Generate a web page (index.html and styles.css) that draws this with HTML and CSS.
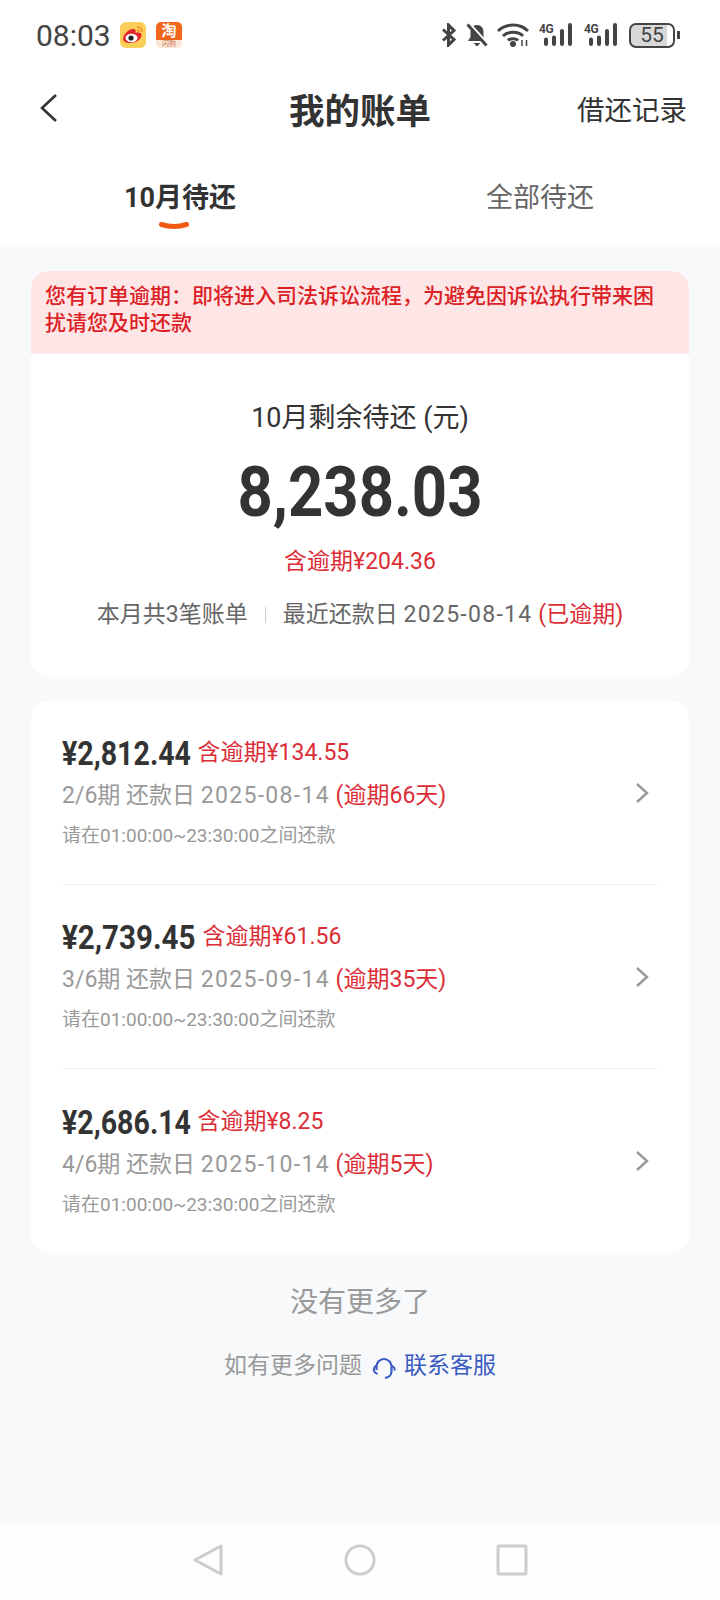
FILE: index.html
```html
<!DOCTYPE html>
<html>
<head>
<meta http-equiv="Content-Type" content="text/html; charset=utf-8"/>
<title>我的账单</title>
<link rel="stylesheet" href="styles.css">
</head>
<body>

<div class="status">
  <span class="time">08:03</span>
  <svg class="app-icon" viewBox="0 0 26 26">
    <rect width="26" height="26" rx="6" fill="#fbcf5a"/>
    <path d="M3 17c0-5 6-10 10-10 3 0 3 2 2.500 4 3-1 6-.5 6 2 0 4-5 8-11 8-4 0-7.500-1.500-7.500-4z" fill="#e6262c"/>
    <ellipse cx="11.500" cy="16" rx="6" ry="4.200" fill="#fff"/>
    <circle cx="11" cy="16" r="2.600" fill="#222"/>
    <path d="M17 5c3 0 5 2 5 5M17 8c1.300 0 2 .8 2 2" fill="none" stroke="#ef8d1c" stroke-width="1.500"/>
  </svg>
  <span class="tao"><span class="tao-top">淘</span><span class="tao-sub">闪购</span></span>
  <span class="status-right">
    <svg class="ic-bt" viewBox="0 0 16 24"><path d="M2 6.500l11 10-5.500 5.500V2L13 7.500 2 17.500" fill="none" stroke="#444" stroke-width="3"/></svg>
    <svg class="ic-bell" viewBox="0 0 22 24"><path d="M11 2c4 0 6.500 3 6.500 7v5l2.500 4H2l2.500-4V9C4.500 5 7 2 11 2z" fill="#444"/><path d="M7.500 20h7l-3.500 3.500z" fill="#444"/><path d="M3 0l19 21" stroke="#fff" stroke-width="2.500"/><path d="M1.500 1.500l19 21" stroke="#444" stroke-width="3"/></svg>
    <svg class="ic-wifi" viewBox="0 0 32 24"><path d="M1 8c8-8 22-8 30 0M6 13c5-5 15-5 20 0M11 17.500c2.500-2.500 7.500-2.500 10 0" fill="none" stroke="#444" stroke-width="3"/><circle cx="16" cy="21" r="3" fill="#444"/><path d="M25 17v6M29.500 17v6" stroke="#444" stroke-width="1.500"/></svg>
    <span class="net"><span class="net-g">4G</span><svg viewBox="0 0 30 23"><path d="M2 16.500V21M10 14.500V21M18 8V21M26 2V21" stroke="#444" stroke-width="4" stroke-linecap="round"/></svg></span>
    <span class="net"><span class="net-g">4G</span><svg viewBox="0 0 30 23"><path d="M2 16.500V21M10 14.500V21M18 8V21M26 2V21" stroke="#444" stroke-width="4" stroke-linecap="round"/></svg></span>
    <span class="battery"><span class="battery-num">55</span></span><span class="battery-cap"></span>
  </span>
</div>

<div class="nav">
  <svg class="back" viewBox="0 0 20 30"><path d="M17 2L3 15l14 13" fill="none" stroke="#333" stroke-width="2.600"/></svg>
  <div class="nav-title">我的账单</div>
  <div class="nav-link">借还记录</div>
</div>

<div class="tabs">
  <div class="tab tab-on">
    <span>10月待还</span>
    <svg class="tab-mark" viewBox="0 0 30 8"><path d="M2.500 2.500c8 2.500 17 2.500 25 0" fill="none" stroke="#f25a13" stroke-width="5" stroke-linecap="round"/></svg>
  </div>
  <div class="tab"><span>全部待还</span></div>
</div>

<div class="main">
  <div class="card">
    <div class="alert">您有订单逾期&#xFF1A;即将进入司法诉讼流程&#xFF0C;为避免因诉讼执行带来困扰请您及时还款</div>
    <div class="summary">
      <div class="sum-title">10月剩余待还 (元)</div>
      <div class="sum-amount">8,238.03</div>
      <div class="sum-over">含逾期¥204.36</div>
      <div class="sum-meta">
        <span>本月共3笔账单</span>
        <span class="sep"></span>
        <span>最近还款日 <span class="date">2025-08-14</span> <span class="red">(已逾期)</span></span>
      </div>
    </div>
  </div>

  <div class="card bills">
    <div class="bill">
      <div class="bill-text">
        <div class="bill-top"><span class="bill-amount">¥2,812.44</span><span class="red">含逾期¥134.55</span></div>
        <div class="bill-date">2/6期 还款日 <span class="date">2025-08-14</span> <span class="red">(逾期66天)</span></div>
        <div class="bill-note">请在01:00:00~23:30:00之间还款</div>
      </div>
      <svg class="chev" viewBox="0 0 14 22"><path d="M2 2l10 9-10 9" fill="none" stroke="#999" stroke-width="2.400"/></svg>
    </div>
    <div class="bill">
      <div class="bill-text">
        <div class="bill-top"><span class="bill-amount bill-amount-wide">¥2,739.45</span><span class="red">含逾期¥61.56</span></div>
        <div class="bill-date">3/6期 还款日 <span class="date">2025-09-14</span> <span class="red">(逾期35天)</span></div>
        <div class="bill-note">请在01:00:00~23:30:00之间还款</div>
      </div>
      <svg class="chev" viewBox="0 0 14 22"><path d="M2 2l10 9-10 9" fill="none" stroke="#999" stroke-width="2.400"/></svg>
    </div>
    <div class="bill">
      <div class="bill-text">
        <div class="bill-top"><span class="bill-amount">¥2,686.14</span><span class="red">含逾期¥8.25</span></div>
        <div class="bill-date">4/6期 还款日 <span class="date">2025-10-14</span> <span class="red">(逾期5天)</span></div>
        <div class="bill-note">请在01:00:00~23:30:00之间还款</div>
      </div>
      <svg class="chev" viewBox="0 0 14 22"><path d="M2 2l10 9-10 9" fill="none" stroke="#999" stroke-width="2.400"/></svg>
    </div>
  </div>

  <div class="nomore">没有更多了</div>
  <div class="help">
    <span>如有更多问题</span>
    <svg class="headset" viewBox="0 0 24 24"><path d="M4.500 14v-3.500a7.500 7.500 0 0 1 15 0v5c0 3.500-3 6-6.500 6.500" fill="none" stroke="#3a5bc0" stroke-width="2.200"/><path d="M5 9.500C2 10.500 .5 14 3 16.500l2.500 1.500" fill="none" stroke="#3a5bc0" stroke-width="2"/><path d="M19.500 10c2.500.5 3.500 2.500 3 4.500" fill="none" stroke="#3a5bc0" stroke-width="2"/></svg>
    <span class="link">联系客服</span>
  </div>
</div>

<div class="sysbar">
  <svg viewBox="0 0 32 34"><path d="M29 3v28L3 17z" fill="none" stroke="#ccc" stroke-width="3" stroke-linejoin="round"/></svg>
  <svg viewBox="0 0 34 34"><circle cx="17" cy="17" r="15" fill="none" stroke="#ccc" stroke-width="3"/></svg>
  <svg viewBox="0 0 32 34"><rect x="2" y="3" width="28" height="28" rx="1.500" fill="none" stroke="#ccc" stroke-width="3"/></svg>
</div>

</body>
</html>
```

FILE: styles.css
```css
html, body {
   margin: 0;
   padding: 0;
}

body {
   width: 720px;
   height: 1600px;
   display: flex;
   flex-direction: column;
   background-color: #f8f9fb;
   color: #333;
   font-family: Roboto, "Noto Sans CJK SC", sans-serif;
   overflow: hidden;
}

.red {
   color: #dc2d36;
}

.date {
   letter-spacing: 1.300px;
}

/* status bar */
.status {
   height: 70px;
   padding: 0 40px 0 36px;
   display: flex;
   align-items: center;
   background-color: white;
   color: #444;
   box-sizing: border-box;
}

.time {
   font-size: 30px;
   width: 84px;
}

.app-icon {
   width: 26px;
   height: 26px;
}

.tao {
   width: 26px;
   height: 26px;
   margin-left: 10px;
   display: flex;
   flex-direction: column;
   align-items: center;
   border-radius: 5px;
   overflow: hidden;
   background-color: #fbe8da;
}

.tao-top {
   width: 100%;
   height: 18px;
   line-height: 18px;
   text-align: center;
   background-color: #f2661c;
   color: white;
   font-size: 15px;
   font-weight: bold;
}

.tao-sub {
   font-size: 7px;
   line-height: 8px;
   color: #c9714a;
}

.status-right {
   margin-left: auto;
   display: flex;
   align-items: center;
}

.ic-bt {
   width: 16px;
   height: 24px;
   margin-right: 9px;
}

.ic-bell {
   width: 22px;
   height: 24px;
   margin-right: 9px;
}

.ic-wifi {
   width: 32px;
   height: 24px;
   margin-right: 10px;
}

.net {
   width: 35px;
   height: 24px;
   margin-right: 10px;
   display: flex;
   align-items: flex-start;
}

.net svg {
   width: 30px;
   height: 23px;
   margin-left: -12px;
}

.net-g {
   font-size: 12px;
   line-height: 12px;
   font-weight: bold;
   letter-spacing: -0.5px;
   width: 17px;
}

.battery {
   width: 46px;
   height: 25px;
   border: 2px solid #444;
   border-radius: 7px;
   box-sizing: border-box;
   background: linear-gradient(to right, #d8d8d8 86%, white 86%);
   display: flex;
   align-items: center;
   justify-content: center;
}

.battery-num {
   font-size: 21px;
   line-height: 20px;
}

.battery-cap {
   width: 3px;
   height: 8px;
   margin-left: 2px;
   background-color: #444;
}

/* title bar */
.nav {
   height: 76px;
   padding: 0 33px 0 39px;
   display: grid;
   grid-template-columns: 1fr auto 1fr;
   align-items: center;
   background-color: white;
}

.back {
   width: 20px;
   height: 30px;
}

.nav-title {
   font-size: 35.500px;
   font-weight: bold;
   margin-left: -6px;
}

.nav-link {
   font-size: 27.500px;
   text-align: right;
}

/* tabs */
.tabs {
   height: 101px;
   display: flex;
   background-color: white;
   box-sizing: border-box;
   padding-top: 33px;
}

.tab {
   flex: 1;
   display: flex;
   flex-direction: column;
   align-items: center;
   font-size: 27px;
   line-height: 38px;
   color: #666;
}

.tab-on {
   color: #333;
   font-weight: bold;
}

.tab-mark {
   width: 30px;
   height: 8px;
   margin: 5px 13px 0 0;
}

/* content */
.main {
   flex: 1;
   padding: 24px 31px 0;
}

.card {
   background-color: white;
   border-radius: 18px;
   overflow: hidden;
}

.alert {
   background-color: #ffe6e6;
   color: #dc1f26;
   font-size: 21px;
   font-weight: 500;
   line-height: 27px;
   padding: 12px 30px 17px 14px;
}

.summary {
   padding: 47px 0;
   text-align: center;
}

.sum-title {
   font-size: 27px;
   line-height: 34px;
}

/* no DIN here, squeeze Roboto to the same narrow digits */
.sum-amount {
   margin-top: 17px;
   font-size: 70px;
   line-height: 80px;
   font-weight: bold;
   transform: scaleX(0.88);
}

.sum-over {
   margin-top: 15px;
   font-size: 23px;
   line-height: 30px;
   color: #dc2d36;
}

.sum-meta {
   margin-top: 23px;
   font-size: 23px;
   line-height: 30px;
   color: #666;
   display: flex;
   justify-content: center;
   align-items: center;
}

.sep {
   width: 1px;
   height: 16px;
   margin: 0 17px;
   background-color: #ccc;
}

.bills {
   margin-top: 24px;
   padding: 0 30px;
}

.bill {
   height: 184px;
   display: flex;
   align-items: center;
   border-top: 1px solid #f2f2f2;
   box-sizing: border-box;
}

.bill:first-child {
   height: 183px;
   border-top: none;
}

.bill:last-child {
   height: 185px;
}

.bill-text {
   flex: 1;
   padding: 0 0 2px 1px;
}

.bill-top {
   display: flex;
   align-items: center;
   font-size: 23px;
   line-height: 40px;
}

.bill-amount {
   font-size: 34px;
   font-weight: bold;
   transform: scaleX(0.84);
   transform-origin: left center;
   margin-right: -18px;
}

.bill-amount-wide {
   transform: scaleX(0.87);
   margin-right: -13px;
}

.bill-date {
   margin-top: 7px;
   font-size: 23px;
   line-height: 32px;
   color: #999;
}

.bill-note {
   margin-top: 10px;
   font-size: 19px;
   line-height: 28px;
   color: #999;
}

.chev {
   width: 14px;
   height: 22px;
   margin-right: 10px;
}

.nomore {
   margin-top: 30px;
   text-align: center;
   font-size: 28px;
   line-height: 40px;
   color: #999;
}

.help {
   margin-top: 25px;
   display: flex;
   justify-content: center;
   align-items: center;
   font-size: 23px;
   line-height: 36px;
   color: #999;
}

.headset {
   width: 24px;
   height: 24px;
   margin: 4px 8px 0 10px;
}

.link {
   color: #3a5bc0;
}

/* system nav */
.sysbar {
   height: 78px;
   display: flex;
   justify-content: center;
   align-items: center;
   gap: 120px;
   background-color: #fdfdfd;
   padding-bottom: 2px;
   box-sizing: border-box;
}

.sysbar svg {
   width: 32px;
   height: 34px;
}
```
